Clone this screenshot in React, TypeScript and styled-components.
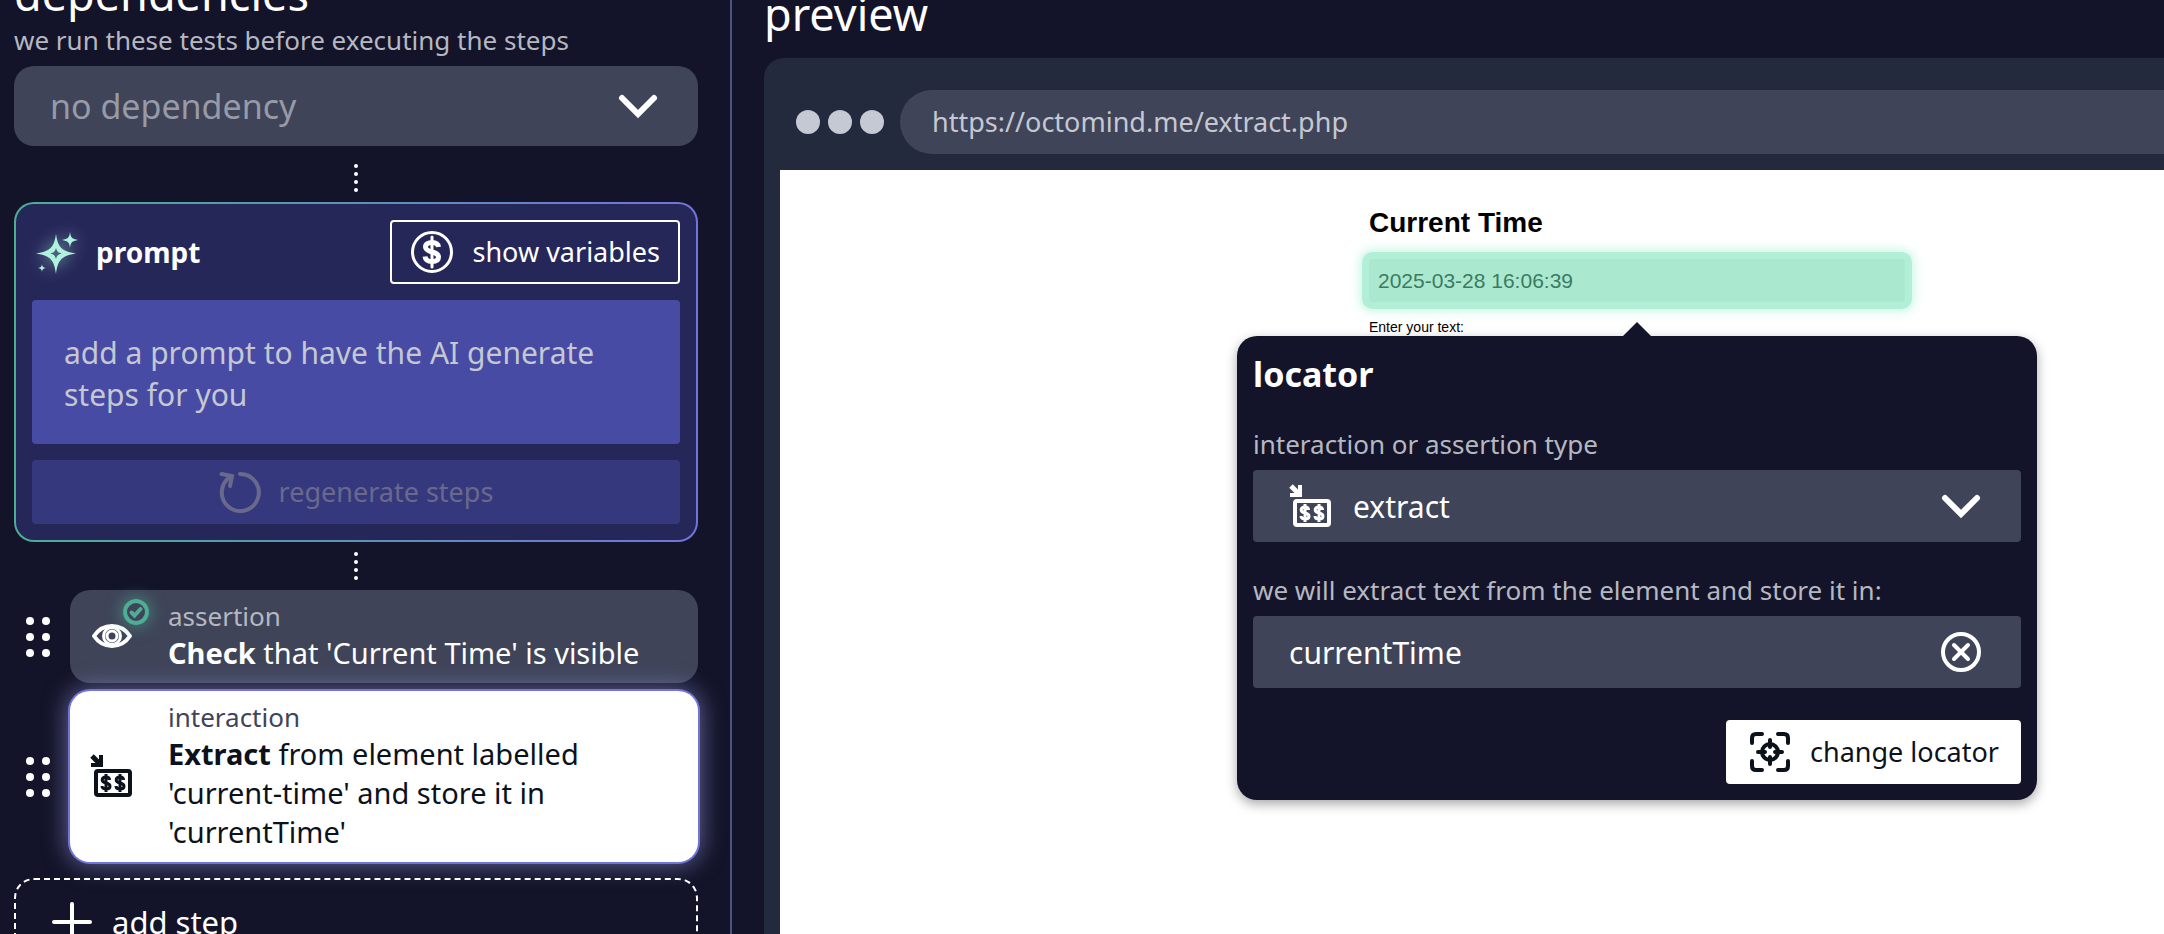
import React from "react";
import styled, { createGlobalStyle, css } from "styled-components";

const color = {
  night: "#131429",
  slate: "#3f4459",
  frame: "#242a3d",
  ink: "#0b121c",
  muted: "#b6b8c1",
  faint: "#979ba7",
  mint: "#b0f2dd",
  green: "#4cae93",
  violet: "#7074db",
  divider: "#4b5480",
};

const GlobalStyle = createGlobalStyle`
  *, *::before, *::after { box-sizing: border-box; }
  body {
    margin: 0;
    overflow: hidden;
    background: ${color.night};
    color: #fff;
    font-family: "Noto Sans", sans-serif;
  }
  h1, h2, p, ul { margin: 0; padding: 0; }
  button, input, select, textarea { font-family: inherit; }
`;

const Layout = styled.main`
  display: grid;
  grid-template-columns: minmax(0, 732fr) minmax(0, 1432fr);
  height: 100vh;
  overflow: hidden;
`;

const StepsPanel = styled.section`
  padding: 0 32px 0 14px;
  border-right: 2px solid ${color.divider};
`;

const PreviewPanel = styled.section`
  display: flex;
  flex-direction: column;
  padding-left: 32px;
`;

const Title = styled.h1<{ $scrolled: number }>`
  margin-top: -${(p) => p.$scrolled}px;
  font-size: 45px;
  line-height: 56px;
  font-weight: 400;
`;

const Caption = styled.label`
  display: block;
  margin-bottom: 8px;
  color: ${color.muted};
  font-size: 26px;
  line-height: 36px;
  white-space: nowrap;
`;

const Field = styled.div<{ $large?: boolean }>`
  display: flex;
  align-items: center;
  gap: 20px;
  height: ${(p) => (p.$large ? 80 : 72)}px;
  padding: 0 40px 0 36px;
  border-radius: ${(p) => (p.$large ? 20 : 4)}px;
  background: ${color.slate};
`;

const bareControl = css`
  flex: 1;
  min-width: 0;
  height: 100%;
  padding: 0;
  border: 0;
  outline: 0;
  appearance: none;
  background: transparent;
  color: #fff;
  font-size: 30px;
`;

const Select = styled.select<{ $placeholder?: boolean }>`
  ${bareControl}
  ${(p) => p.$placeholder && css`
    color: ${color.faint};
    font-size: 34px;
  `}
`;

const TextInput = styled.input`
  ${bareControl}
`;

const Connector = styled.div<{ $spaced?: boolean }>`
  display: flex;
  flex-direction: column;
  align-items: center;
  justify-content: center;
  gap: 4px;
  height: 48px;
  margin-top: ${(p) => (p.$spaced ? 8 : 0)}px;
`;

const ConnectorDot = styled.span`
  width: 4px;
  height: 4px;
  border-radius: 50%;
  background: #fff;
`;

const PromptCard = styled.section`
  display: flex;
  flex-direction: column;
  gap: 16px;
  padding: 16px;
  border: 2px solid transparent;
  border-radius: 20px;
  background:
    linear-gradient(#262759, #262759) padding-box,
    linear-gradient(90deg, ${color.green}, ${color.violet}) border-box;
`;

const PromptHeader = styled.header`
  display: flex;
  align-items: center;
  gap: 16px;
`;

const PromptTitle = styled.h2`
  flex: 1;
  font-size: 28px;
  line-height: 40px;
  font-weight: 700;
`;

const PromptInput = styled.textarea`
  display: block;
  width: 100%;
  height: 144px;
  padding: 32px;
  border: 0;
  border-radius: 4px;
  outline: 0;
  resize: none;
  overflow: hidden;
  background: #484ba3;
  color: #fff;
  font-size: 30px;
  line-height: 42px;
  &::placeholder { color: #c5c8d1; opacity: 1; }
`;

const Button = styled.button<{ $tone: "outline" | "solid" | "ghost" }>`
  display: flex;
  align-items: center;
  justify-content: center;
  gap: 18px;
  height: 64px;
  padding: 0 18px;
  border: 2px solid;
  border-radius: 4px;
  font-size: 27px;
  line-height: 36px;
  white-space: nowrap;
  ${(p) => p.$tone === "outline" && css`
    border-color: #fff;
    background: transparent;
    color: #fff;
  `}
  ${(p) => p.$tone === "solid" && css`
    padding: 0 20px;
    border-color: #fff;
    background: #fff;
    color: ${color.ink};
  `}
  ${(p) => p.$tone === "ghost" && css`
    border-color: #36387d;
    background: #36387d;
    color: #69698d;
  `}
`;

const StepList = styled.ul`
  display: flex;
  flex-direction: column;
  gap: 8px;
  margin-bottom: 16px;
  list-style: none;
`;

const StepRow = styled.li`
  display: flex;
  align-items: center;
`;

const DragHandle = styled.button`
  display: grid;
  grid-template-columns: 8px 8px;
  gap: 8px;
  flex: none;
  width: 56px;
  padding: 0 0 0 12px;
  border: 0;
  background: transparent;
`;

const HandleDot = styled.span`
  height: 8px;
  border-radius: 50%;
  background: #fff;
`;

const StepCard = styled.article<{ $selected?: boolean }>`
  display: flex;
  align-items: center;
  gap: 34px;
  flex: 1;
  min-width: 0;
  padding: 9px 20px 11px;
  border-radius: 20px;
  background: ${(p) => (p.$selected ? "#fff" : color.slate)};
  color: ${(p) => (p.$selected ? color.ink : "#fff")};
  ${(p) => p.$selected && css`
    box-shadow: 0 0 0 2px ${color.violet}, 0 0 24px 2px rgba(160, 160, 235, 0.6);
  `}
`;

const StepIcon = styled.div`
  position: relative;
  display: flex;
  flex: none;
`;

const StatusBadge = styled.span`
  position: absolute;
  top: -15px;
  right: -15px;
  display: flex;
  border-radius: 50%;
  box-shadow: 0 0 16px 2px rgba(76, 174, 147, 0.55);
`;

const StepKind = styled.p<{ $selected?: boolean }>`
  color: ${(p) => (p.$selected ? color.slate : color.muted)};
  font-size: 26px;
  line-height: 34px;
`;

const StepText = styled.p`
  font-size: 29px;
  line-height: 39px;
`;

const AddStep = styled.button`
  display: flex;
  align-items: center;
  gap: 20px;
  width: 100%;
  height: 88px;
  padding: 0 36px;
  border: 2px dashed #fff;
  border-radius: 20px;
  background: transparent;
  color: #fff;
  font-size: 31px;
`;

const BrowserFrame = styled.div`
  display: flex;
  flex-direction: column;
  flex: 1;
  margin: 16px -346px 0 0;
  padding: 32px 16px 0;
  border-radius: 20px 20px 0 0;
  background: ${color.frame};
`;

const BrowserBar = styled.div`
  display: flex;
  align-items: center;
  gap: 16px;
  padding: 0 16px 16px;
`;

const WindowDots = styled.div`
  display: flex;
  gap: 8px;
`;

const WindowDot = styled.span`
  width: 24px;
  height: 24px;
  border-radius: 50%;
  background: #c5c9d3;
`;

const AddressInput = styled.input`
  flex: 1;
  height: 64px;
  padding: 0 32px 2px;
  border: 0;
  border-radius: 32px;
  outline: 0;
  background: ${color.slate};
  color: #c5c8d1;
  font-size: 27px;
`;

const Viewport = styled.div`
  flex: 1;
  padding-top: 37px;
  background: #fff;
  color: #000;
  font-family: "Liberation Sans", Arial, sans-serif;
`;

const SiteContent = styled.div`
  width: 536px;
  margin: 0 auto;
`;

const SiteTitle = styled.h2`
  margin-bottom: 20px;
  font-size: 28px;
  line-height: 32px;
`;

const Target = styled.div`
  position: relative;
  margin-bottom: 15px;
`;

const TargetValue = styled.div`
  padding: 0 9px;
  border-radius: 4px;
  background: #abe8d0;
  box-shadow: 0 0 0 7px #b1efd7, 0 0 0 9px #e0faf1, 0 0 12px 9px #c9f5e6;
  color: #3b7b61;
  font-size: 21px;
  line-height: 43px;
`;

const SiteLabel = styled.p`
  font-size: 14px;
  line-height: 20px;
`;

const Popover = styled.section`
  position: absolute;
  z-index: 1;
  top: calc(100% + 34px);
  left: 50%;
  width: 800px;
  margin-left: -400px;
  padding: 16px;
  border-radius: 20px;
  background: ${color.night};
  box-shadow: 0 4px 12px rgba(0, 0, 0, 0.35);
  color: #fff;
  font-family: "Noto Sans", sans-serif;
  &::before {
    content: "";
    position: absolute;
    bottom: 100%;
    left: 50%;
    margin-left: -14px;
    border: 14px solid transparent;
    border-top-width: 0;
    border-bottom-color: ${color.night};
  }
`;

const PopoverTitle = styled.h2`
  font-size: 34px;
  line-height: 44px;
  font-weight: 700;
`;

const FormGroup = styled.div`
  margin-top: 30px;
`;

const PopoverActions = styled.footer`
  display: flex;
  justify-content: flex-end;
  margin-top: 32px;
`;

const IconButton = styled.button`
  display: flex;
  flex: none;
  padding: 0;
  border: 0;
  background: transparent;
  color: #fff;
`;

const Icon = styled.svg`
  display: block;
  flex: none;
  overflow: visible;
  fill: none;
  stroke: currentColor;
  stroke-linecap: round;
`;

const GlowIcon = styled(Icon)`
  fill: ${color.mint};
  stroke: none;
  filter: drop-shadow(0 0 8px rgba(176, 242, 221, 0.6));
`;

const Chevron = () => (
  <Icon width="40" height="40" viewBox="0 0 40 40" strokeWidth="6">
    <path d="M4 12 L20 28 L36 12" />
  </Icon>
);

const Sparkles = () => (
  <GlowIcon width="48" height="48" viewBox="0 0 48 48">
    <path
      fillRule="evenodd"
      d="M24 6 C26 19 29 23 44 25.500 C29 28 26 32 24 46 C22 32 19 28 4 25.500 C19 23 22 19 24 6 Z M24 20 C23 23.500 22 24.500 18.500 25.500 C22 26.500 23 27.500 24 31 C25 27.500 26 26.500 29.500 25.500 C26 24.500 25 23.500 24 20 Z"
    />
    <path d="M38 4 C38.700 9.500 40 11 46 12 C40 13 38.700 14.500 38 20 C37.300 14.500 36 13 30 12 C36 11 37.300 9.500 38 4 Z" />
    <path d="M10 36 C10.400 38.700 11 39.500 14 40 C11 40.500 10.400 41.300 10 44 C9.600 41.300 9 40.500 6 40 C9 39.500 9.600 38.700 10 36 Z" />
  </GlowIcon>
);

const DollarCircle = () => (
  <Icon width="44" height="44" viewBox="0 0 44 44" strokeWidth="3">
    <circle cx="22" cy="22" r="19.500" />
    <path d="M28.500 17 C28 13.500 25 12.500 22 12.500 C18.500 12.500 15.500 14 15.500 17 C15.500 20 18.500 21 22 22 C26 23 28.500 24 28.500 27 C28.500 30 26 31.500 22 31.500 C18.500 31.500 15.500 30 15 26.500" strokeWidth="5" strokeLinecap="butt" />
    <path d="M22 7 V37" strokeWidth="3" />
  </Icon>
);

const Regenerate = () => (
  <Icon width="42" height="42" viewBox="0 0 42 42" strokeWidth="4">
    <path d="M21 3 A18.500 18.500 0 1 1 12 5.500" />
    <path d="M2.500 3 L13 5 L11 15" />
  </Icon>
);

const Eye = () => (
  <Icon width="44" height="44" viewBox="0 0 44 44" strokeWidth="4">
    <path d="M4 22 C9 14.500 15 12 22 12 C29 12 35 14.500 40 22 C35 29.500 29 32 22 32 C15 32 9 29.500 4 22 Z" strokeLinejoin="round" />
    <circle cx="22" cy="22" r="8.500" strokeWidth="3" />
    <circle cx="22" cy="22" r="5" strokeWidth="3" />
  </Icon>
);

const CheckBadge = () => (
  <Icon width="26" height="26" viewBox="0 0 26 26" strokeWidth="4" color={color.green}>
    <circle cx="13" cy="13" r="11" />
    <path d="M8.500 13.500 L11.500 16.500 L17.500 10" />
  </Icon>
);

const ExtractIcon = () => (
  <Icon width="44" height="44" viewBox="0 0 44 44" strokeWidth="4">
    <path d="M2 2 L10 10" strokeWidth="5" strokeLinecap="butt" />
    <path d="M11 1 V11 H1" strokeLinecap="butt" />
    <rect x="6" y="17" width="34" height="24" rx="2" />
    <path d="M19.500 26 C19.500 23.800 18 23 16 23 C13.800 23 12.200 24 12.200 26 C12.200 28 14 28.500 16 29 C18.500 29.600 20 30.200 20 32.200 C20 34.200 18 35 16 35 C13.800 35 12 34 12 32 M16 20 V38" strokeWidth="3" strokeLinecap="butt" />
    <path d="M33.500 26 C33.500 23.800 32 23 30 23 C27.800 23 26.200 24 26.200 26 C26.200 28 28 28.500 30 29 C32.500 29.600 34 30.200 34 32.200 C34 34.200 32 35 30 35 C27.800 35 26 34 26 32 M30 20 V38" strokeWidth="3" strokeLinecap="butt" />
  </Icon>
);

const ClearIcon = () => (
  <Icon width="40" height="40" viewBox="0 0 40 40" strokeWidth="4">
    <circle cx="20" cy="20" r="18" />
    <path d="M13 13 L27 27 M27 13 L13 27" />
  </Icon>
);

const LocatorIcon = () => (
  <Icon width="44" height="44" viewBox="0 0 44 44" strokeWidth="4">
    <path d="M4 13 V8 Q4 4 8 4 H14 M30 4 H36 Q40 4 40 8 V13 M40 31 V36 Q40 40 36 40 H30 M14 40 H8 Q4 40 4 36 V31" />
    <circle cx="22" cy="22" r="8" />
    <path d="M22 10 V17 M22 27 V34 M10 22 H17 M27 22 H34" />
  </Icon>
);

const PlusIcon = () => (
  <Icon width="40" height="40" viewBox="0 0 40 40" strokeWidth="4">
    <path d="M20 2 V38 M2 20 H38" />
  </Icon>
);

const DottedConnector = ({ spaced }: { spaced?: boolean }) => (
  <Connector $spaced={spaced} aria-hidden="true">
    {[0, 1, 2, 3].map((dot) => (
      <ConnectorDot key={dot} />
    ))}
  </Connector>
);

type StepProps = {
  kind: string;
  icon: React.ReactNode;
  selected?: boolean;
  children: React.ReactNode;
};

const Step = ({ kind, icon, selected, children }: StepProps) => (
  <StepRow>
    <DragHandle type="button" aria-label="reorder step">
      {[0, 1, 2, 3, 4, 5].map((dot) => (
        <HandleDot key={dot} />
      ))}
    </DragHandle>
    <StepCard $selected={selected}>
      <StepIcon>{icon}</StepIcon>
      <div>
        <StepKind $selected={selected}>{kind}</StepKind>
        <StepText>{children}</StepText>
      </div>
    </StepCard>
  </StepRow>
);

export default function App() {
  return (
    <>
      <GlobalStyle />
      <Layout>
        <StepsPanel>
          <Title $scrolled={34}>dependencies</Title>
          <Caption htmlFor="dependency">we run these tests before executing the steps</Caption>
          <Field $large>
            <Select id="dependency" $placeholder>
              <option>no dependency</option>
            </Select>
            <Chevron />
          </Field>
          <DottedConnector spaced />
          <PromptCard>
            <PromptHeader>
              <Sparkles />
              <PromptTitle>prompt</PromptTitle>
              <Button type="button" $tone="outline">
                <DollarCircle />
                show variables
              </Button>
            </PromptHeader>
            <PromptInput aria-label="prompt" placeholder="add a prompt to have the AI generate steps for you" />
            <Button type="button" $tone="ghost" disabled>
              <Regenerate />
              regenerate steps
            </Button>
          </PromptCard>
          <DottedConnector />
          <StepList>
            <Step
              kind="assertion"
              icon={
                <>
                  <Eye />
                  <StatusBadge>
                    <CheckBadge />
                  </StatusBadge>
                </>
              }
            >
              <b>Check</b> that 'Current Time' is visible
            </Step>
            <Step kind="interaction" icon={<ExtractIcon />} selected>
              <b>Extract</b> from element labelled 'current-time' and store it in 'currentTime'
            </Step>
          </StepList>
          <AddStep type="button">
            <PlusIcon />
            add step
          </AddStep>
        </StepsPanel>

        <PreviewPanel>
          <Title $scrolled={14}>preview</Title>
          <BrowserFrame>
            <BrowserBar>
              <WindowDots>
                <WindowDot />
                <WindowDot />
                <WindowDot />
              </WindowDots>
              <AddressInput aria-label="address" readOnly value="https://octomind.me/extract.php" />
            </BrowserBar>
            <Viewport>
              <SiteContent>
                <SiteTitle>Current Time</SiteTitle>
                <Target>
                  <TargetValue>2025-03-28 16:06:39</TargetValue>
                  <Popover>
                    <PopoverTitle>locator</PopoverTitle>
                    <FormGroup>
                      <Caption htmlFor="type">interaction or assertion type</Caption>
                      <Field>
                        <ExtractIcon />
                        <Select id="type">
                          <option>extract</option>
                        </Select>
                        <Chevron />
                      </Field>
                    </FormGroup>
                    <FormGroup>
                      <Caption htmlFor="variable">we will extract text from the element and store it in:</Caption>
                      <Field>
                        <TextInput id="variable" defaultValue="currentTime" />
                        <IconButton type="button" aria-label="clear">
                          <ClearIcon />
                        </IconButton>
                      </Field>
                    </FormGroup>
                    <PopoverActions>
                      <Button type="button" $tone="solid">
                        <LocatorIcon />
                        change locator
                      </Button>
                    </PopoverActions>
                  </Popover>
                </Target>
                <SiteLabel>Enter your text:</SiteLabel>
              </SiteContent>
            </Viewport>
          </BrowserFrame>
        </PreviewPanel>
      </Layout>
    </>
  );
}
